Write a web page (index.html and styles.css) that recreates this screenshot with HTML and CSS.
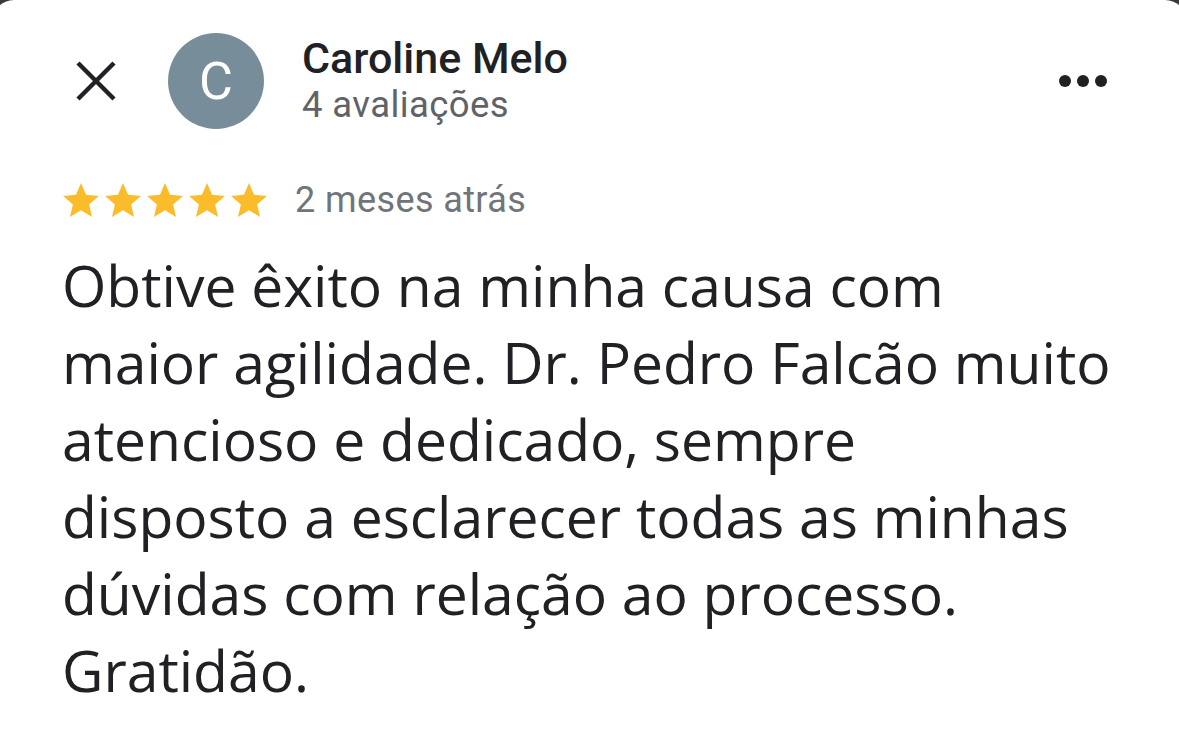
FILE: index.html
```html
<!DOCTYPE html>
<html lang="pt-BR">
<head>
    <meta charset="UTF-8">
    <meta name="viewport" content="width=device-width, initial-scale=1.0">
    <title>Avaliação - Caroline Melo</title>
    <link rel="stylesheet" href="styles.css">
</head>
<body>
    <div class="sheet">
        <div class="review-header">
            <button class="icon-btn close-btn" aria-label="Fechar">
                <svg width="42" height="42" viewBox="0 0 42 42">
                    <path d="M3 3L39 39M39 3L3 39" stroke="#202124" stroke-width="4.5" fill="none"/>
                </svg>
            </button>
            <div class="avatar">C</div>
            <div class="author">
                <div class="author-name">Caroline Melo</div>
                <div class="author-meta">4 avaliações</div>
            </div>
            <button class="icon-btn more-btn" aria-label="Mais opções">
                <span class="dot"></span>
                <span class="dot"></span>
                <span class="dot"></span>
            </button>
        </div>

        <div class="rating-row">
            <div class="stars">
                <svg class="star" viewBox="2 2 20 19"><path d="M12 17.27L18.18 21l-1.64-7.03L22 9.24l-7.19-.61L12 2 9.19 8.63 2 9.24l5.46 4.73L5.82 21z"/></svg>
                <svg class="star" viewBox="2 2 20 19"><path d="M12 17.27L18.18 21l-1.64-7.03L22 9.24l-7.19-.61L12 2 9.19 8.63 2 9.24l5.46 4.73L5.82 21z"/></svg>
                <svg class="star" viewBox="2 2 20 19"><path d="M12 17.27L18.18 21l-1.64-7.03L22 9.24l-7.19-.61L12 2 9.19 8.63 2 9.24l5.46 4.73L5.82 21z"/></svg>
                <svg class="star" viewBox="2 2 20 19"><path d="M12 17.27L18.18 21l-1.64-7.03L22 9.24l-7.19-.61L12 2 9.19 8.63 2 9.24l5.46 4.73L5.82 21z"/></svg>
                <svg class="star" viewBox="2 2 20 19"><path d="M12 17.27L18.18 21l-1.64-7.03L22 9.24l-7.19-.61L12 2 9.19 8.63 2 9.24l5.46 4.73L5.82 21z"/></svg>
            </div>
            <span class="review-date">2 meses atrás</span>
        </div>

        <p class="review-text">Obtive êxito na minha causa com<br>
            maior agilidade. Dr. Pedro Falcão muito<br>
            atencioso e dedicado, sempre<br>
            disposto a esclarecer todas as minhas<br>
            dúvidas com relação ao processo.<br>
            Gratidão.</p>
    </div>
</body>
</html>
```

FILE: styles.css
```css
html, body {
    margin: 0;
    height: 100%;
}

body {
    background-color: #3a3a3a;
    overflow: hidden;
    font-family: Roboto, "Liberation Sans", sans-serif;
    color: #202124;
}

.sheet {
    min-height: 100%;
    margin: 0 -8px;
    padding: 33px 0 0 8px;
    background-color: #fff;
    border-radius: 22px 22px 0 0;
}

.review-header {
    display: flex;
    align-items: center;
    padding: 0 80px 0 75px;
}

.icon-btn {
    background: none;
    border: none;
    padding: 0;
    cursor: pointer;
}

.close-btn {
    display: flex;
    width: 42px;
    height: 42px;
}

.avatar {
    width: 96px;
    height: 96px;
    margin-left: 51px;
    border-radius: 50%;
    background-color: #778d9a;
    color: #fff;
    font-size: 52px;
    display: flex;
    align-items: center;
    justify-content: center;
    flex-shrink: 0;
}

.author {
    margin-left: 38px;
    padding-top: 2px;
    flex: 1;
}

.author-name {
    font-size: 43px;
    font-weight: 500;
    line-height: 46px;
}

.author-meta {
    font-size: 36.5px;
    letter-spacing: 0.4px;
    line-height: 48px;
    color: #5f6368;
}

.more-btn {
    display: flex;
    gap: 6px;
}

.dot {
    width: 12px;
    height: 12px;
    border-radius: 50%;
    background-color: #202124;
}

.rating-row {
    display: flex;
    align-items: center;
    margin-top: 50px;
    padding-left: 63px;
}

.stars {
    display: flex;
    gap: 6px;
}

.star {
    width: 36px;
    height: 34px;
    fill: #fbbc2c;
}

.review-date {
    margin-left: 28px;
    font-size: 36px;
    letter-spacing: 0.4px;
    color: #70757a;
}

.review-text {
    margin: 26px 0 0;
    padding-left: 62px;
    font-family: "Open Sans", sans-serif;
    font-size: 57px;
    line-height: 77px;
    white-space: nowrap;
    color: #202124;
}
```
